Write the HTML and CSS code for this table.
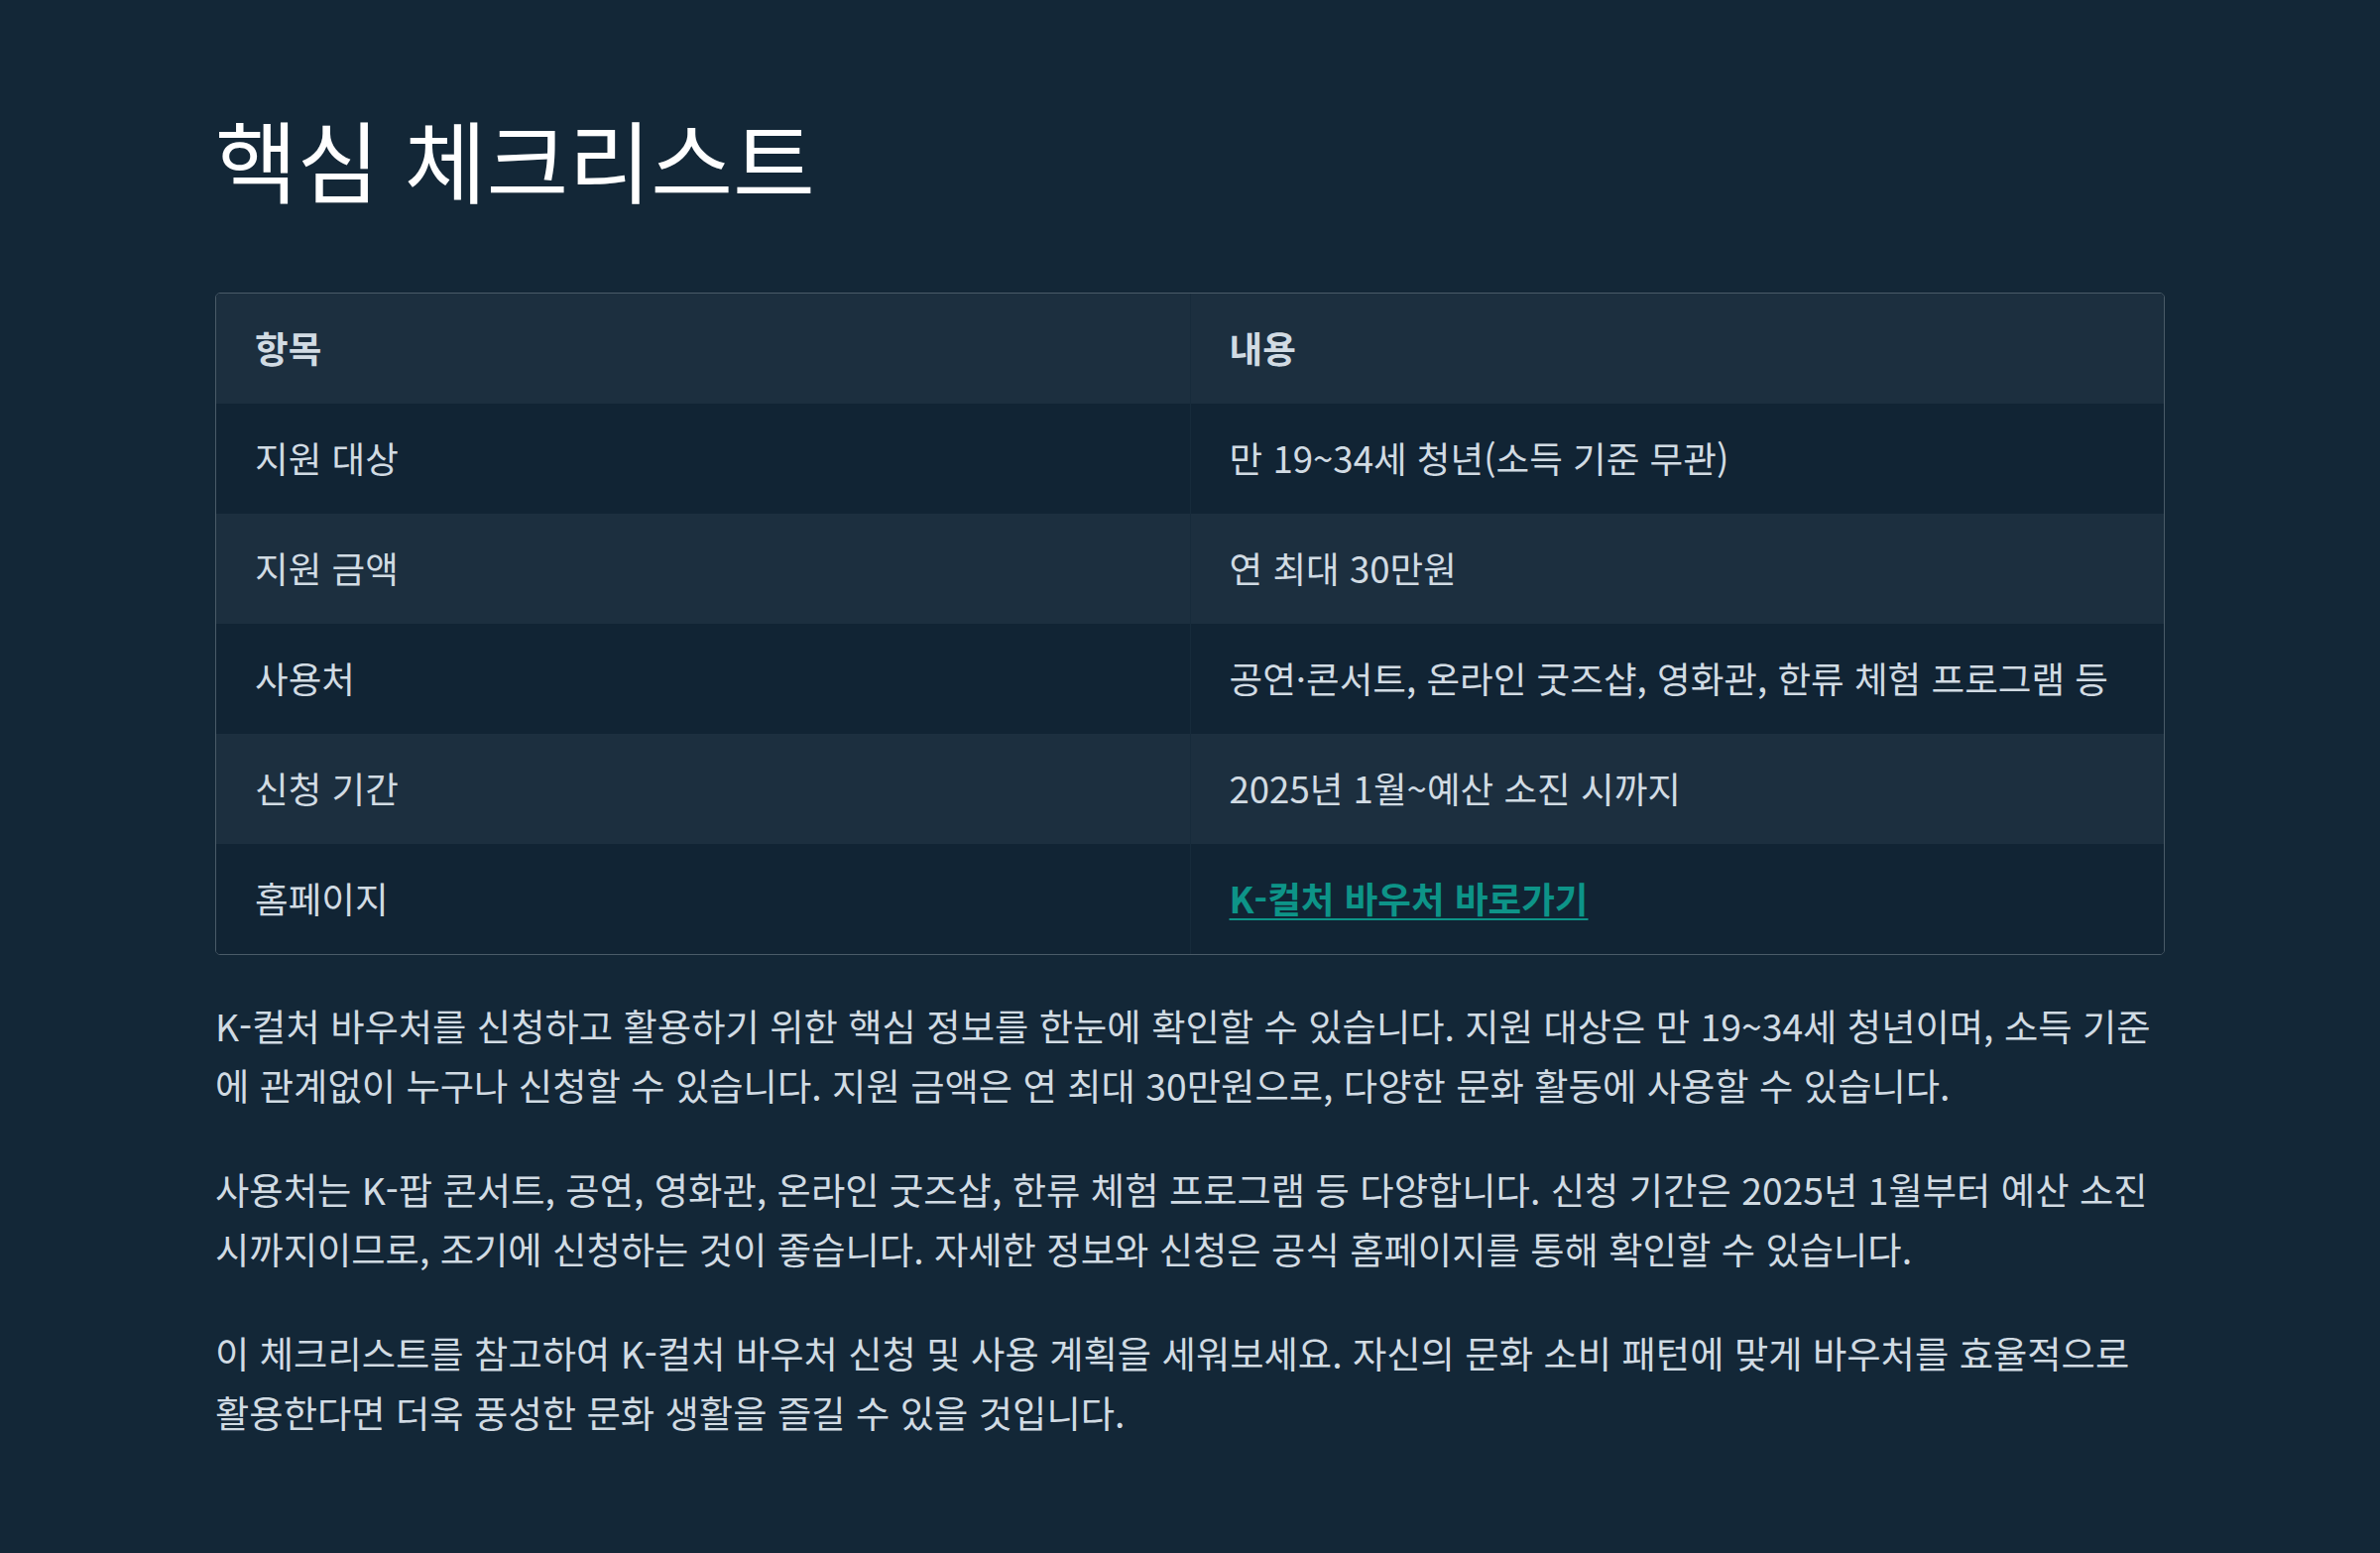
FILE: index.html
```html
<!DOCTYPE html>
<html lang="ko">
<head>
<meta charset="utf-8">
<title>핵심 체크리스트</title>
<link rel="stylesheet" href="styles.css">
</head>
<body>
<main class="page">
  <h1 class="title">핵심 체크리스트</h1>
  <div class="table-wrap">
    <table class="checklist">
      <thead>
        <tr><th>항목</th><th>내용</th></tr>
      </thead>
      <tbody>
        <tr><td>지원 대상</td><td>만 19~34세 청년(소득 기준 무관)</td></tr>
        <tr><td>지원 금액</td><td>연 최대 30만원</td></tr>
        <tr><td>사용처</td><td>공연·콘서트, 온라인 굿즈샵, 영화관, 한류 체험 프로그램 등</td></tr>
        <tr><td>신청 기간</td><td>2025년 1월~예산 소진 시까지</td></tr>
        <tr><td>홈페이지</td><td><a class="link" href="#">K-컬처 바우처 바로가기</a></td></tr>
      </tbody>
    </table>
  </div>
  <p class="text">K-컬처 바우처를 신청하고 활용하기 위한 핵심 정보를 한눈에 확인할 수 있습니다. 지원 대상은 만 19~34세 청년이며, 소득 기준에 관계없이 누구나 신청할 수 있습니다. 지원 금액은 연 최대 30만원으로, 다양한 문화 활동에 사용할 수 있습니다.</p>
  <p class="text">사용처는 K-팝 콘서트, 공연, 영화관, 온라인 굿즈샵, 한류 체험 프로그램 등 다양합니다. 신청 기간은 2025년 1월부터 예산 소진 시까지이므로, 조기에 신청하는 것이 좋습니다. 자세한 정보와 신청은 공식 홈페이지를 통해 확인할 수 있습니다.</p>
  <p class="text">이 체크리스트를 참고하여 K-컬처 바우처 신청 및 사용 계획을 세워보세요. 자신의 문화 소비 패턴에 맞게 바우처를 효율적으로 활용한다면 더욱 풍성한 문화 생활을 즐길 수 있을 것입니다.</p>
</main>
</body>
</html>
```

FILE: styles.css
```css
html, body {
  margin: 0;
  padding: 0;
  background: #132737;
}

body {
  font-family: "Noto Sans CJK KR", "Noto Sans", sans-serif;
  color: #d1dbe3;
  min-height: 1566px;
}

.page {
  max-width: 1966px;
  margin: 0 auto;
  padding: 110px 0 60px;
}

.title {
  margin: 0 0 87px;
  font-size: 90px;
  line-height: 98px;
  font-weight: 400;
  color: #ffffff;
}

.table-wrap {
  border: 1px solid #4a5b68;
  border-radius: 5px;
  overflow: hidden;
}

.checklist {
  width: 100%;
  border-collapse: collapse;
  table-layout: fixed;
  font-size: 36.6px;
  line-height: 59px;
}

.checklist th,
.checklist td {
  padding: 25px 12px 27px 39px;
  text-align: left;
  vertical-align: middle;
  white-space: nowrap;
}

.checklist th + th,
.checklist td + td {
  border-left: 1px solid #172b3b;
}

.checklist th {
  font-weight: 700;
  background: #1c2f3f;
  color: #d1dbe3;
}

.checklist tbody tr:nth-child(odd) td {
  background: #112434;
}

.checklist tbody tr:nth-child(even) td {
  background: #1c2f3f;
}

.link {
  color: #0d9488;
  font-weight: 700;
  text-decoration: underline;
  text-underline-offset: 5px;
  text-decoration-thickness: 2px;
}

.text {
  margin: 42px 0 0;
  font-size: 37.3px;
  line-height: 59.5px;
  color: #d1dbe3;
}

.text + .text {
  margin-top: 46px;
}
```
